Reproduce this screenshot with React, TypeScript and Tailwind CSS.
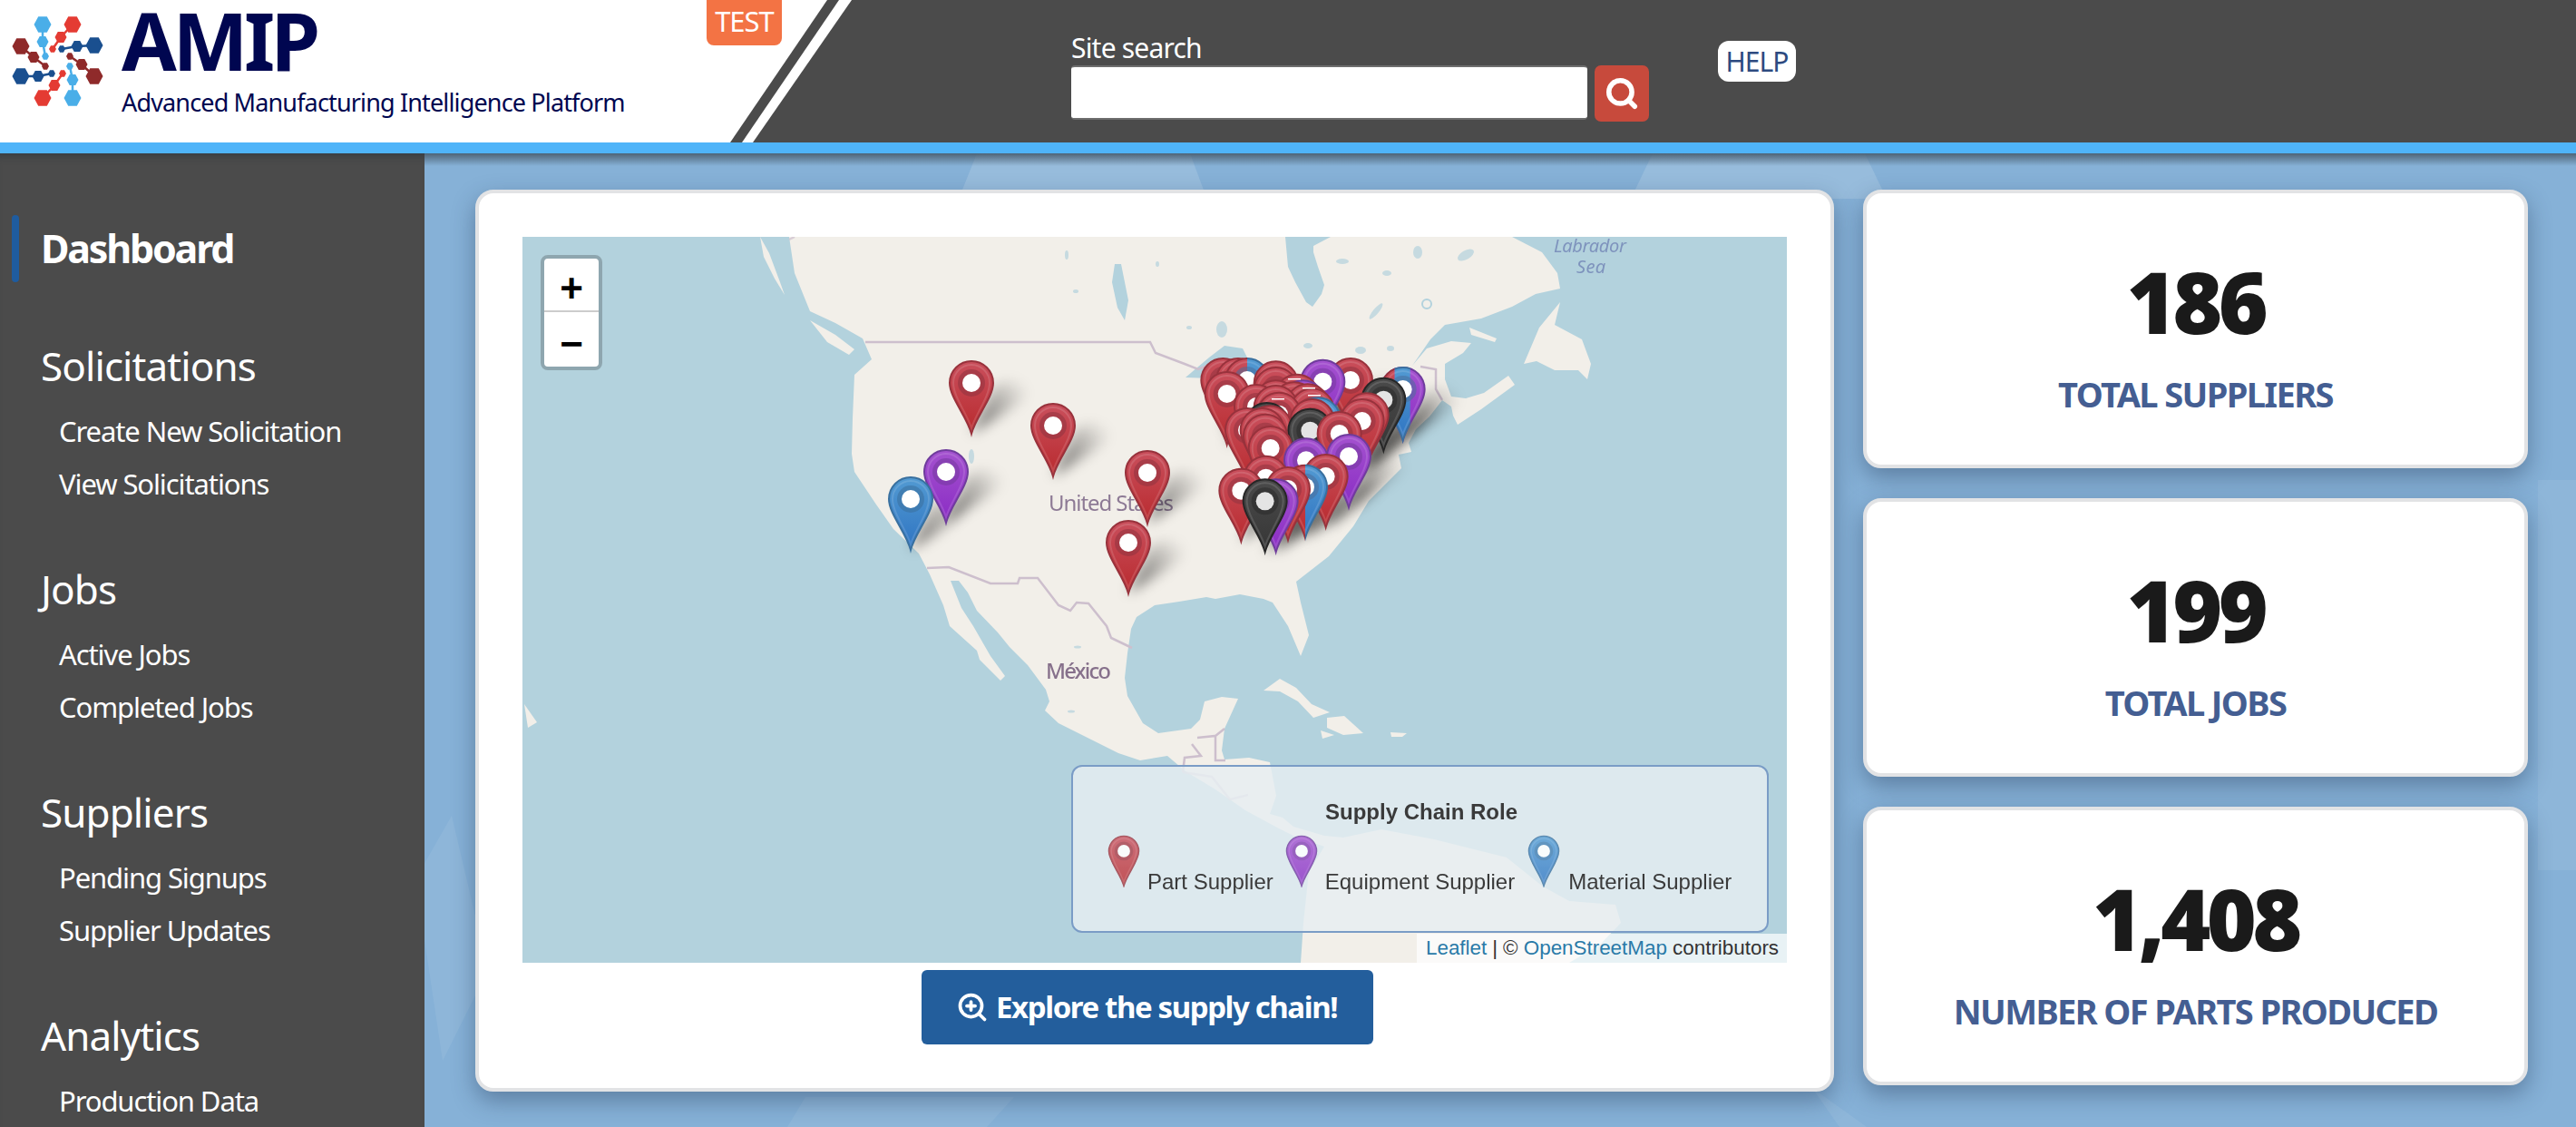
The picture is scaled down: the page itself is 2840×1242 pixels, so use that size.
import React from "react";
import { ZoomIn, Search } from "lucide-react";

const COLORS: Record<string, [string, string, string, string]> = {
  red: ["#c94f5c", "#b92a2e", "#98323c", "#8f3340"],
  purple: ["#a452cf", "#8a2cc4", "#6f3c9c", "#74399f"],
  blue: ["#529ad2", "#2f74c2", "#39709f", "#3a6f9c"],
  black: ["#4a4a4a", "#363636", "#262626", "#2a2a2a"],
};
const PIN = "M0 0C-5 -19 -24 -40 -24 -56A24 24 0 1 1 24 -56C24 -40 5 -19 0 0Z";
const WATER = "#b3d2dd";
const LAND = "#f2efe9";

function Defs() {
  return (
    <defs>
      {Object.entries(COLORS).map(([k, c]) => (
        <linearGradient key={k} id={`g-${k}`} x1="0" y1="0" x2="0" y2="1">
          <stop offset="0" stopColor={c[0]} />
          <stop offset="1" stopColor={c[1]} />
        </linearGradient>
      ))}
      <linearGradient id="sh" gradientUnits="userSpaceOnUse" x1="4" y1="-4" x2="62" y2="-50">
        <stop offset="0" stopColor="#000" stopOpacity="0.55" />
        <stop offset="1" stopColor="#000" stopOpacity="0" />
      </linearGradient>
      <filter id="blur" x="-50%" y="-50%" width="200%" height="200%">
        <feGaussianBlur stdDeviation="7" />
      </filter>
      <clipPath id="cl-l"><rect x="-30" y="-90" width="30" height="100" /></clipPath>
      <clipPath id="cl-r"><rect x="0" y="-90" width="30" height="100" /></clipPath>
      <clipPath id="cl-m"><rect x="-9" y="-90" width="17" height="100" /></clipPath>
      <clipPath id="cl-ll"><rect x="-30" y="-90" width="21" height="100" /></clipPath>
    </defs>
  );
}

function PinBody({ color }: { color: string }) {
  const c = COLORS[color];
  return (
    <>
      <path d={PIN} fill={`url(#g-${color})`} stroke={c[2]} strokeWidth="2" />
      <path d="M0 -6C-4 -21 -20 -41 -20 -56A20 20 0 1 1 20 -56C20 -41 4 -21 0 -6Z" fill="none" stroke="#fff" strokeOpacity="0.13" strokeWidth="2" />
    </>
  );
}

function Pin({ x, y, color, split }: { x: number; y: number; color: string; split?: "rb" | "rbp" }) {
  const c = COLORS[color];
  return (
    <g transform={`translate(${x} ${y})`}>
      {split === "rb" && (
        <>
          <g clipPath="url(#cl-l)"><PinBody color="red" /></g>
          <g clipPath="url(#cl-r)"><PinBody color="blue" /></g>
        </>
      )}
      {split === "rbp" && (
        <>
          <PinBody color="purple" />
          <g clipPath="url(#cl-ll)"><PinBody color="red" /></g>
          <g clipPath="url(#cl-m)"><PinBody color="blue" /></g>
        </>
      )}
      {!split && <PinBody color={color} />}
      <circle cy="-56" r="15" fill={split ? "#4a6d9a" : c[3]} fillOpacity="0.55" />
      <circle cy="-56" r="10" fill={color === "black" ? "#e4e4e4" : "#fff"} />
    </g>
  );
}

function Shadow({ x, y }: { x: number; y: number }) {
  return (
    <path
      transform={`translate(${x} ${y})`}
      d="M0 0C12 -8 48 -28 62 -44C64 -60 36 -64 22 -48Z"
      fill="url(#sh)"
      filter="url(#blur)"
    />
  );
}

// the clustered pins are read from the crop at (1250,360), tripled
const c = (zx: number, top: number, color: string, split?: "rb" | "rbp") => ({
  x: 674 + zx / 3,
  y: 99 + (top + 240) / 3,
  color,
  split,
});

const PINS = [
  { x: 495, y: 217, color: "red" },
  { x: 585, y: 264, color: "red" },
  { x: 689, y: 316, color: "red" },
  { x: 668, y: 393, color: "red" },
  { x: 467, y: 315, color: "purple" },
  { x: 428, y: 345, color: "blue" },
  c(295, 105, "red"),
  c(345, 105, "red"),
  c(375, 105, "red", "rb"),
  c(470, 115, "red"),
  c(470, 135, "red"),
  c(625, 110, "purple"),
  c(717, 105, "red"),
  c(890, 135, "purple", "rbp"),
  c(308, 150, "red"),
  c(826, 170, "black"),
  c(540, 158, "red"),
  c(560, 178, "purple"),
  c(405, 192, "red"),
  c(470, 178, "red"),
  c(530, 184, "red"),
  c(575, 190, "red"),
  c(470, 195, "red"),
  c(590, 205, "red"),
  c(610, 235, "blue"),
  c(480, 218, "red"),
  c(590, 240, "red"),
  c(770, 220, "red"),
  c(755, 240, "red"),
  c(440, 252, "black"),
  c(450, 262, "red"),
  c(375, 270, "red"),
  c(425, 270, "red"),
  c(435, 290, "red"),
  c(583, 272, "black"),
  c(680, 282, "red"),
  c(452, 330, "red"),
  c(570, 370, "purple"),
  c(711, 357, "purple"),
  c(437, 428, "red"),
  c(635, 423, "red"),
  c(567, 458, "red", "rb"),
  c(355, 470, "red"),
  c(510, 465, "red"),
  c(470, 505, "purple"),
  c(434, 505, "black"),
].sort((a, b) => a.y - b.y);

const CONTINENT =
  "M294 0L300 40L317 82L345 95L375 112L385 135L366 152L364 200L363 239L366 259L390 295L409 322L437 349L449 372L464 406" +
  "L471 429L501 456L504 466L527 489L532 484L516 462L497 429L484 409L472 379L481 379L491 392L501 412L524 436L537 452" +
  "L557 472L577 499L581 512L576 522L591 536L617 549L657 569L681 577L711 572L731 589L764 609L797 632L834 652L850 660L884 672" +
  "L867 700L861 756L858 800L1154 800L1188 780L1211 756L1205 736L1154 732L1125 716L1085 684L1005 664L947 653L905 662L884 660" +
  "L850 650L838 640L824 636L831 616L824 579L801 574L774 576L771 566L774 542L789 509L771 507L752 512L747 532L737 542L701 547" +
  "L684 536L667 506L664 486L667 459L671 432L677 419L697 406L724 402L754 397L764 399L791 394L817 399L827 403L844 429L858 462" +
  "L867 439L858 403L853 380L889 352L916 319L933 291L969 255L966 240L980 237L977 227L985 212L1000 198L1014 180L1024 187L1026 197L1031 207" +
  "L1057 190L1094 163L1087 153L1060 172L1040 178L1024 176L1017 157L1017 140L1037 128L1046 117L1024 115L997 123L981 142L1001 113L1017 97" +
  "L1057 90L1091 77L1117 63L1144 57L1141 40L1124 17L1091 0Z";

function MapArt() {
  return (
    <svg viewBox="0 0 1394 800" className="absolute inset-0 h-full w-full">
      <Defs />
      <rect width="1394" height="800" fill={WATER} />
      <path fill={LAND} d={CONTINENT} />
      {/* Islands */}
      <g fill={LAND}>
        <path d="M262 0L272 18L284 50L289 64L278 46L266 22Z" />
        <path d="M317 92L345 108L366 124L360 130L336 116Z" />
        <path d="M1104 140L1121 100L1144 72L1138 97L1168 113L1178 140L1174 157L1164 147L1138 147L1118 137Z" />
        <path d="M1044 100L1074 112L1072 116L1046 108Z" />
        <path d="M817 500L835 487L853 497L870 515L890 524L872 530L855 512L835 501Z" />
        <path d="M887 530L906 528L927 547L905 549L887 541Z" />
        <path d="M880 544L895 549L882 553Z" />
        <path d="M957 546L975 547L970 551L958 551Z" />
        <path d="M2 515L16 535L6 541Z" />
      </g>
      {/* Water inland */}
      <g fill={WATER}>
        <path d="M841 0L844 33L852 50L864 72L871 77L881 63L884 53L877 33L872 17L872 10L891 0Z" />
        <path d="M653 30L660 30L668 70L664 92L656 78L650 50Z" />
        <path d="M731 155L757 133L774 120L794 123L799 133L778 150L760 156Z" />
        <g opacity="0.7">
          <ellipse cx="771" cy="102" rx="6" ry="9" />
          <ellipse cx="941" cy="82" rx="3" ry="11" transform="rotate(40 941 82)" />
          <ellipse cx="866" cy="120" rx="5" ry="3" />
          <ellipse cx="924" cy="125" rx="6" ry="4" />
          <ellipse cx="957" cy="123" rx="4" ry="3" />
          <ellipse cx="904" cy="27" rx="7" ry="3" />
          <ellipse cx="987" cy="17" rx="5" ry="7" />
          <ellipse cx="1040" cy="20" rx="10" ry="5" transform="rotate(-30 1040 20)" />
          <ellipse cx="953" cy="40" rx="5" ry="3" />
          <ellipse cx="495" cy="242" rx="3" ry="8" />
          <ellipse cx="600" cy="20" rx="2" ry="5" />
          <ellipse cx="610" cy="60" rx="3" ry="2" />
          <ellipse cx="700" cy="30" rx="2" ry="3" />
          <ellipse cx="735" cy="100" rx="3" ry="2" />
          <ellipse cx="612" cy="452" rx="4" ry="1.5" />
          <ellipse cx="605" cy="523" rx="4" ry="1.5" />
        </g>
      </g>
      <circle cx="997" cy="74" r="5" fill="none" stroke={WATER} strokeWidth="2" />
      {/* Borders */}
      <g fill="none" stroke="#cdbfcd" strokeWidth="2.5">
        <path d="M378 116H692L698 128L730 140L745 146L760 140" />
        <path d="M446 365L470 364L516 382L546 382L548 376L568 376L591 406L604 412L611 403L624 404L644 429L649 442L672 453" />
        <path d="M990 143L1007 146L1007 168L1014 180" />
        <path d="M738 559L748 572L730 574L728 590M744 552L764 550L764 577L775 577M764 550L774 542" />
        <path d="M294 3L300 0M728 590L760 595L780 620L800 615" strokeOpacity="0.7" />
      </g>
      {/* Place names */}
      <text x="580" y="302" fontFamily="'Noto Sans',sans-serif" fontSize="24" fill="#8d7a95" stroke={LAND} strokeWidth="2" paintOrder="stroke" textLength="138">
        United States
      </text>
      <text x="577" y="487" fontFamily="'Noto Sans',sans-serif" fontSize="24" fontWeight="500" fill="#86708b" stroke={LAND} strokeWidth="2" paintOrder="stroke" textLength="72">
        México
      </text>
      <g fontFamily="'Noto Sans',sans-serif" fontStyle="italic" fontSize="20" fill="#7e93bd" stroke={WATER} strokeWidth="2" paintOrder="stroke">
        <text x="1137" y="17" textLength="80">Labrador</text>
        <text x="1162" y="40" textLength="32">Sea</text>
      </g>
      {/* Markers */}
      {PINS.map((p, i) => <Shadow key={i} x={p.x} y={p.y} />)}
      {PINS.map((p, i) => <Pin key={i} {...p} />)}
      <g fill="#fff">
        <rect x="844" y="156" width="14" height="1.5" />
        <rect x="860" y="166" width="14" height="1.5" />
        <rect x="866" y="174" width="14" height="1.5" />
        <rect x="826" y="178" width="14" height="1.5" />
      </g>
    </svg>
  );
}

function LegendPin({ color }: { color: string }) {
  return (
    <svg viewBox="-26 -82 52 84" className="mb-[9px] h-[58px] w-[36px] shrink-0 opacity-80">
      <Pin x={0} y={0} color={color} />
    </svg>
  );
}

function Hex({ x, y, r, fill }: { x: number; y: number; r: number; fill: string }) {
  const h = r * 0.92;
  return (
    <polygon
      fill={fill}
      points={`${x - r},${y} ${x - r / 2},${y - h} ${x + r / 2},${y - h} ${x + r},${y} ${x + r / 2},${y + h} ${x - r / 2},${y + h}`}
    />
  );
}

const ARMS: [string, number[]][] = [
  ["#4aaee8", [47, 27, 47, 46, 50, 62]],
  ["#e43b33", [80, 27, 67, 41, 58, 54]],
  ["#1a4f8f", [104, 50, 85, 51, 68, 54]],
  ["#8f2a2a", [23, 51, 37, 63, 50, 73]],
  ["#1a4f8f", [23, 84, 42, 84, 57, 81]],
  ["#e43b33", [47, 108, 60, 94, 69, 81]],
  ["#4aaee8", [80, 108, 80, 88, 77, 73]],
  ["#8f2a2a", [104, 84, 90, 71, 77, 62]],
];

function Logo() {
  return (
    <svg viewBox="0 0 120 130" className="h-[130px] w-[120px] shrink-0">
      {ARMS.map(([col, a], i) => (
        <g key={i}>
          <polyline points={a.join(" ")} fill="none" stroke={col} strokeWidth="2.5" />
          <Hex x={a[0]} y={a[1]} r={9.5} fill={col} />
          <Hex x={a[2]} y={a[3]} r={6.5} fill={col} />
          <Hex x={a[4]} y={a[5]} r={4} fill={col} />
        </g>
      ))}
    </svg>
  );
}

function NavGroup({ title, items }: { title: string; items: string[] }) {
  return (
    <div className="h-[246px] pt-[3px]">
      <div className="h-[66px] pl-[45px] text-[44px] leading-[66px] tracking-[-0.9px] text-white">{title}</div>
      <div className="pt-[10px]">
        {items.map((t) => (
          <div key={t} className="h-[58px] pl-[65px] text-[31px] leading-[58px] tracking-[-1.1px] text-white">{t}</div>
        ))}
      </div>
    </div>
  );
}

function Stat({ value, label }: { value: string; label: string }) {
  return (
    <div className="flex h-[307px] flex-col items-center rounded-[20px] border-4 border-[#e2e3e5] bg-white shadow-[0_10px_26px_rgba(30,50,80,0.4)]">
      <div className="mt-[59px] h-[120px] text-[94px] font-black leading-[120px] tracking-[-4.5px] text-[#1a1a1a]">{value}</div>
      <div className="mt-[17px] text-[38px] font-bold leading-[50px] tracking-[-1.6px] text-[#445e92]">{label}</div>
    </div>
  );
}

export default function App() {
  return (
    <div className="flex h-[1242px] w-[2840px] flex-col overflow-hidden bg-[#86b1d7] font-['Noto_Sans',sans-serif]">
      <header className="relative z-10 flex h-[157px] shrink-0 bg-[#4b4b4b]">
        <div className="relative flex w-[939px] shrink-0 bg-white [clip-path:polygon(0_0,100%_0,830px_100%,0_100%)]">
          <Logo />
          <div className="pl-[14px]">
            <div className="h-[88px] text-[88px] font-bold leading-[88px] tracking-[-4.5px] text-[#000650]">AMIP</div>
            <div className="mt-[5px] text-[27px] leading-[40px] tracking-[-0.85px] text-[#000650]">Advanced Manufacturing Intelligence Platform</div>
          </div>
          <div className="absolute left-[779px] top-0 flex h-[50px] w-[83px] items-center justify-center rounded-b-[8px] bg-[#f37344] pb-[4px] text-[31px] tracking-[-1px] text-white">TEST</div>
          <div className="absolute inset-y-0 right-0 w-[134px] bg-[#4b4b4b] [clip-path:polygon(107px_0,120px_0,13px_100%,0_100%)]" />
        </div>
        <div className="ml-[242px] flex flex-col">
          <label className="mt-[34px] h-[38px] text-[30px] leading-[38px] tracking-[-0.8px] text-white">Site search</label>
          <div className="flex gap-[8px]">
            <div className="h-[60px] w-[569px] rounded-[4px] border-t-2 border-b-2 border-[#6d6d6d] bg-white" />
            <div className="flex h-[62px] w-[60px] items-center justify-center rounded-[7px] bg-[#c74a3c]">
              <Search className="h-[38px] w-[38px] text-white" strokeWidth={3.5} />
            </div>
          </div>
        </div>
        <div className="ml-[76px] mt-[45px] flex h-[45px] w-[86px] items-center justify-center rounded-[12px] bg-white text-[30px] tracking-[-1px] text-[#2d4a80]">HELP</div>
      </header>
      <div className="relative z-10 h-[12px] shrink-0 bg-[#4fb4f9]" />
      <div className="flex min-h-0 flex-1">
        <nav className="relative w-[468px] shrink-0 overflow-hidden bg-[#4b4b4b] shadow-[inset_0_10px_10px_-8px_rgba(40,50,60,0.7)]">
          <div className="relative h-[198px] pt-[68px]">
            <div className="absolute left-[13px] top-[68px] h-[74px] w-[8px] rounded-full bg-[#1f5c9f]" />
            <div className="h-[74px] pl-[45px] text-[43px] font-bold leading-[74px] tracking-[-2.2px] text-white">Dashboard</div>
          </div>
          <NavGroup title="Solicitations" items={["Create New Solicitation", "View Solicitations"]} />
          <NavGroup title="Jobs" items={["Active Jobs", "Completed Jobs"]} />
          <NavGroup title="Suppliers" items={["Pending Signups", "Supplier Updates"]} />
          <NavGroup title="Analytics" items={["Production Data"]} />
        </nav>
        <main className="relative flex min-w-0 flex-1 gap-[32px] overflow-hidden pl-[56px] pt-[40px]">
          <svg viewBox="0 0 2372 1073" className="absolute inset-0 h-full w-full" aria-hidden="true">
            <g fill="#fff" fillOpacity="0.14">
              <polygon points="609,0 844,0 870,70 820,70 610,70 585,60" />
              <polygon points="1354,0 1588,0 1612,50 1330,50" />
            </g>
            <g fill="#fff" fillOpacity="0.07">
              <polygon points="-10,800 30,730 70,900 20,1000" />
              <polygon points="420,1040 650,1040 620,1073 400,1073" />
              <polygon points="2330,360 2372,360 2372,790 2330,790" />
              <polygon points="1530,1030 1590,1073 1560,1073" />
            </g>
          </svg>
          <div className="absolute inset-x-0 top-0 h-[14px] bg-gradient-to-b from-[#4e6477] to-transparent" />
          <section className="relative flex h-[994px] w-[1498px] shrink-0 flex-col items-start rounded-[20px] border-4 border-[#e2e3e5] bg-white px-[48px] pt-[48px] shadow-[0_10px_26px_rgba(30,50,80,0.4)]">
            <div className="relative h-[800px] w-[1394px] shrink-0 overflow-hidden">
              <MapArt />
              <div className="absolute left-[20px] top-[20px] w-[68px] rounded-[8px] border-4 border-[#8ea6af] bg-white font-['Liberation_Sans',sans-serif] text-[44px] font-bold leading-none text-black">
                <div className="flex h-[59px] items-center justify-center border-b-2 border-[#ccc] pt-[9px]">+</div>
                <div className="flex h-[60px] items-center justify-center pt-[9px]">−</div>
              </div>
              <div className="absolute left-[605px] top-[582px] h-[185px] w-[769px] rounded-[12px] border-2 border-[#7a9cc6] bg-[#e6eef2]/[0.82] font-['Liberation_Sans',sans-serif] text-[24px] text-[#3a3a3a]">
                <div className="pl-[278px] pt-[36px] font-bold leading-[28px]">Supply Chain Role</div>
                <div className="mt-[11px] flex items-end pl-[38px]">
                  <LegendPin color="red" />
                  <span className="ml-[8px] leading-[30px]">Part Supplier</span>
                  <span className="ml-[13px] flex items-end"><LegendPin color="purple" /></span>
                  <span className="ml-[8px] leading-[30px]">Equipment Supplier</span>
                  <span className="ml-[14px] flex items-end"><LegendPin color="blue" /></span>
                  <span className="ml-[9px] leading-[30px]">Material Supplier</span>
                </div>
              </div>
              <div className="absolute bottom-0 right-0 flex h-[32px] w-[408px] items-center bg-white/70 pl-[10px] font-['Liberation_Sans',sans-serif] text-[22.4px] text-[#333]">
                <span className="text-[#2a7aa8]">Leaflet</span>
                <span className="mx-[6px]">|</span>
                <span>©&nbsp;</span>
                <span className="text-[#2a7aa8]">OpenStreetMap</span>
                <span>&nbsp;contributors</span>
              </div>
            </div>
            <button className="ml-[440px] mt-[8px] flex h-[82px] w-[498px] items-center gap-[8px] rounded-[6px] bg-[#235e9c] pl-[38px] text-[33px] font-bold tracking-[-1.4px] text-white">
              <ZoomIn className="h-[36px] w-[36px]" strokeWidth={2.5} />
              Explore the supply chain!
            </button>
          </section>
          <aside className="relative flex w-[733px] shrink-0 flex-col gap-[33px]">
            <Stat value="186" label="TOTAL SUPPLIERS" />
            <Stat value="199" label="TOTAL JOBS" />
            <Stat value="1,408" label="NUMBER OF PARTS PRODUCED" />
          </aside>
        </main>
      </div>
    </div>
  );
}
